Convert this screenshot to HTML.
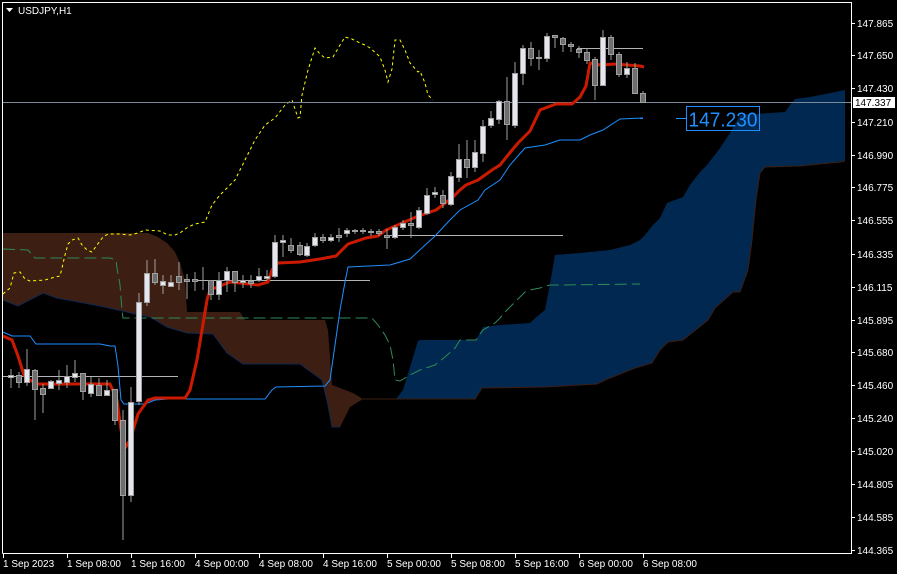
<!DOCTYPE html>
<html><head><meta charset="utf-8"><style>
html,body{margin:0;padding:0;background:#000;}
svg{display:block;font-family:"Liberation Sans",sans-serif;}
</style></head><body>
<svg width="897" height="574" viewBox="0 0 897 574" xmlns="http://www.w3.org/2000/svg">
<rect width="897" height="574" fill="#000"/>
<polygon fill="#3c1e12" points="3,233 148,233 158,237 167,243 175,252 180,263 185,280 187,312 240,312 245,320 325,320 328,330 332,385 340,388 353,393 363,399 350,407 340,427 332,427 328,405 322,380 300,364 243,364 227,353 213,334 187,333 167,327 150,317 140,315 100,306 57,298 43,293 18,306 3,300"/>
<polyline fill="none" stroke="#102850" stroke-width="1" points="3,300 18,306 43,293 57,298 100,306 140,315 150,317 167,327 187,333 213,334 227,353 243,364 300,364 322,380 328,405 332,427 340,427"/>
<polygon fill="#002850" points="396,399 403,390 418,341 420,340 476,340 483,327 500,325 530,323 532,321 540,314 545,310 550,284 555,255 580,253 610,250 630,245 640,240 645,235 652,226 660,218 667,203 683,197 690,185 700,172 707,165 720,148 730,133 740,115 785,112 790,105 795,99 810,97 825,94 845,90 845,161 840,162 800,166 765,167 760,173 756,200 752,240 748,270 740,292 733,292 715,308 708,320 683,340 668,342 660,350 652,363 635,368 620,374 605,380 597,384 545,387 482,388 475,399"/>
<polyline fill="none" stroke="#3c1e12" stroke-width="1" points="363,399 475,399 482,388 545,387 597,384 605,380 620,374 635,368 652,363 660,350 668,342 683,340 708,320 715,308 733,292 740,292 748,270 752,240 756,200 760,173 765,167 800,166 840,162 845,161"/>
<polyline fill="none" stroke="#2e8b57" stroke-width="1" stroke-dasharray="12,5" points="3,249 28,250 35,258 110,258 116,260 117,268 120,285 122,310 123,318 372,318 378,325 385,335 390,345 393,360 395,380 400,381 410,375 420,370 435,365 445,357 455,348 460,340 476,340 483,330 495,323 500,318 505,312 515,302 525,292 530,290 540,288 550,285 560,285 640,284"/>
<g stroke="#b4b4b4" stroke-width="1">
<line x1="3" y1="376.5" x2="178" y2="376.5"/>
<line x1="195" y1="280.5" x2="370" y2="280.5"/>
<line x1="387" y1="235.5" x2="563" y2="235.5"/>
<line x1="577" y1="48.5" x2="643" y2="48.5"/>
</g>
<polyline fill="none" stroke="#ffff00" stroke-width="1" stroke-dasharray="3,3" points="3,294 10,288 14,273 20,272 25,279 30,281 45,280 55,277 60,276 62,268 65,255 68,244 72,240 78,238 82,245 87,250 92,252 97,245 103,237 108,234 120,234 130,235 138,233 145,230 160,231 168,235 175,235 180,233 188,227 195,224 205,222 212,205 220,195 235,180 245,160 255,140 265,125 275,118 285,105 292,100 298,118 300,117 302,95 308,70 315,48 320,54 325,58 333,57 340,45 345,37 352,39 360,43 365,45 370,48 378,55 380,57 385,70 388,82 392,69 395,40 400,40 405,50 410,63 418,72 420,71 425,83 428,95 433,100"/>
<line x1="3" y1="102.5" x2="851" y2="102.5" stroke="#7a8a9a" stroke-width="1"/>
<polyline fill="none" stroke="#1e90ff" stroke-width="1" points="3,332 12,336 30,336 36,344 100,344 110,346 115,346 118,366 121,400 124,404 145,404 155,400 168,399 265,399 272,390 276,387 325,386 330,380 340,310 345,282 348,267 390,265 410,259 435,236 450,220 460,210 478,200 485,190 500,180 510,165 525,148 545,145 560,140 580,140 590,135 603,130 620,119 643,118"/>
<polyline fill="none" stroke="#cc1a00" stroke-width="3" points="3,336 12,340 18,356 24,375 30,380 37,384 110,384 117,400 121,430 125,448 130,440 138,414 148,400 155,398 185,398 190,390 197,360 202,330 207,300 210,290 230,282 258,285 268,282 272,270 278,263 300,262 320,259 336,256 348,244 366,238 378,236 386,230 400,224 416,217 430,212 436,210 452,198 460,190 466,185 478,180 492,170 500,165 508,155 518,143 524,137 530,131 540,110 556,104 572,104 580,97 586,86 590,63 600,65 615,64 640,66 644,67"/>
<g stroke="#a0a0a0" stroke-width="1">
<line x1="11" y1="369" x2="11" y2="388"/><line x1="19" y1="372" x2="19" y2="388"/><line x1="27" y1="349" x2="27" y2="386"/><line x1="35" y1="369" x2="35" y2="420"/><line x1="43" y1="384" x2="43" y2="413"/><line x1="51" y1="380" x2="51" y2="388"/><line x1="59" y1="370" x2="59" y2="390"/><line x1="67" y1="365" x2="67" y2="388"/><line x1="75" y1="360" x2="75" y2="382"/><line x1="83" y1="373" x2="83" y2="400"/><line x1="91" y1="377" x2="91" y2="397"/><line x1="99" y1="378" x2="99" y2="396"/><line x1="107" y1="380" x2="107" y2="396"/><line x1="115" y1="389" x2="115" y2="425"/><line x1="123" y1="410" x2="123" y2="540"/><line x1="131" y1="387" x2="131" y2="502"/><line x1="139" y1="293" x2="139" y2="405"/><line x1="147" y1="260" x2="147" y2="306"/><line x1="155" y1="259" x2="155" y2="285"/><line x1="163" y1="275" x2="163" y2="294"/><line x1="171" y1="275" x2="171" y2="286"/><line x1="179" y1="262" x2="179" y2="290"/><line x1="187" y1="274" x2="187" y2="299"/><line x1="195" y1="272" x2="195" y2="291"/><line x1="203" y1="267" x2="203" y2="290"/><line x1="211" y1="280" x2="211" y2="300"/><line x1="219" y1="272" x2="219" y2="300"/><line x1="227" y1="267" x2="227" y2="292"/><line x1="235" y1="271" x2="235" y2="292"/><line x1="243" y1="275" x2="243" y2="288"/><line x1="251" y1="275" x2="251" y2="288"/><line x1="259" y1="268" x2="259" y2="282"/><line x1="267" y1="270" x2="267" y2="280"/><line x1="275" y1="235" x2="275" y2="278"/><line x1="283" y1="235" x2="283" y2="257"/><line x1="291" y1="238" x2="291" y2="253"/><line x1="300" y1="242" x2="300" y2="256"/><line x1="307" y1="243" x2="307" y2="257"/><line x1="315" y1="233" x2="315" y2="247"/><line x1="323" y1="234" x2="323" y2="243"/><line x1="331" y1="234" x2="331" y2="242"/><line x1="339" y1="228" x2="339" y2="242"/><line x1="347" y1="228" x2="347" y2="237"/><line x1="355" y1="229" x2="355" y2="234"/><line x1="363" y1="228" x2="363" y2="234"/><line x1="371" y1="229" x2="371" y2="236"/><line x1="379" y1="229" x2="379" y2="236"/><line x1="387" y1="229" x2="387" y2="249"/><line x1="395" y1="225" x2="395" y2="239"/><line x1="403" y1="220" x2="403" y2="230"/><line x1="411" y1="212" x2="411" y2="238"/><line x1="419" y1="207" x2="419" y2="229"/><line x1="427" y1="188" x2="427" y2="215"/><line x1="435" y1="187" x2="435" y2="198"/><line x1="443" y1="190" x2="443" y2="208"/><line x1="451" y1="172" x2="451" y2="206"/><line x1="459" y1="144" x2="459" y2="182"/><line x1="467" y1="140" x2="467" y2="178"/><line x1="475" y1="140" x2="475" y2="172"/><line x1="483" y1="120" x2="483" y2="162"/><line x1="491" y1="111" x2="491" y2="128"/><line x1="499" y1="100" x2="499" y2="124"/><line x1="507" y1="77" x2="507" y2="140"/><line x1="515" y1="62" x2="515" y2="128"/><line x1="523" y1="45" x2="523" y2="85"/><line x1="531" y1="42" x2="531" y2="66"/><line x1="539" y1="50" x2="539" y2="70"/><line x1="547" y1="33" x2="547" y2="62"/><line x1="555" y1="35" x2="555" y2="48"/><line x1="563" y1="37" x2="563" y2="52"/><line x1="571" y1="42" x2="571" y2="52"/><line x1="579" y1="46" x2="579" y2="58"/><line x1="587" y1="48" x2="587" y2="64"/><line x1="595" y1="57" x2="595" y2="100"/><line x1="603" y1="30" x2="603" y2="86"/><line x1="611" y1="35" x2="611" y2="60"/><line x1="619" y1="52" x2="619" y2="77"/><line x1="627" y1="62" x2="627" y2="78"/><line x1="635" y1="63" x2="635" y2="93"/><line x1="643" y1="91" x2="643" y2="103"/>
</g>
<g stroke="#a0a0a0" stroke-width="1">
<g fill="#e6e6f0">
<rect x="8.5" y="375.5" width="5" height="2"/><rect x="24.5" y="369.5" width="5" height="13"/><rect x="48.5" y="381.5" width="5" height="7"/><rect x="56.5" y="380.5" width="5" height="3"/><rect x="64.5" y="376.5" width="5" height="6"/><rect x="72.5" y="373.5" width="5" height="4"/><rect x="88.5" y="384.5" width="5" height="9"/><rect x="104.5" y="390.5" width="5" height="5"/><rect x="128.5" y="402.5" width="5" height="93"/><rect x="136.5" y="302.5" width="5" height="99"/><rect x="144.5" y="273.5" width="5" height="29"/><rect x="160.5" y="281.5" width="5" height="4"/><rect x="168.5" y="282.5" width="5" height="4"/><rect x="216.5" y="280.5" width="5" height="14"/><rect x="224.5" y="271.5" width="5" height="9"/><rect x="240.5" y="280.5" width="5" height="2"/><rect x="256.5" y="276.5" width="5" height="4"/><rect x="264.5" y="276.5" width="5" height="2"/><rect x="272.5" y="242.5" width="5" height="34"/><rect x="280.5" y="240.5" width="5" height="2"/><rect x="304.5" y="246.5" width="5" height="9"/><rect x="312.5" y="237.5" width="5" height="8"/><rect x="328.5" y="237.5" width="5" height="3"/><rect x="344.5" y="230.5" width="5" height="3"/><rect x="392.5" y="227.5" width="5" height="10"/><rect x="400.5" y="223.5" width="5" height="4"/><rect x="416.5" y="210.5" width="5" height="17"/><rect x="424.5" y="195.5" width="5" height="18"/><rect x="432.5" y="192.5" width="5" height="2"/><rect x="448.5" y="176.5" width="5" height="28"/><rect x="456.5" y="159.5" width="5" height="18"/><rect x="472.5" y="152.5" width="5" height="15"/><rect x="480.5" y="126.5" width="5" height="27"/><rect x="488.5" y="118.5" width="5" height="7"/><rect x="496.5" y="101.5" width="5" height="18"/><rect x="512.5" y="73.5" width="5" height="52"/><rect x="520.5" y="48.5" width="5" height="25"/><rect x="544.5" y="36.5" width="5" height="22"/><rect x="600.5" y="37.5" width="5" height="48"/><rect x="624.5" y="68.5" width="5" height="6"/>
</g>
<g fill="#6e6e6e">
<rect x="16.5" y="375.5" width="5" height="7"/><rect x="32.5" y="370.5" width="5" height="19"/><rect x="40.5" y="388.5" width="5" height="6"/><rect x="80.5" y="373.5" width="5" height="18"/><rect x="96.5" y="385.5" width="5" height="10"/><rect x="112.5" y="389.5" width="5" height="31"/><rect x="120.5" y="420.5" width="5" height="75"/><rect x="152.5" y="273.5" width="5" height="9"/><rect x="176.5" y="276.5" width="5" height="6"/><rect x="184.5" y="279.5" width="5" height="2"/><rect x="192.5" y="279.5" width="5" height="2"/><rect x="208.5" y="280.5" width="5" height="14"/><rect x="232.5" y="271.5" width="5" height="11"/><rect x="248.5" y="281.5" width="5" height="2"/><rect x="288.5" y="245.5" width="5" height="5"/><rect x="297.5" y="245.5" width="5" height="9"/><rect x="320.5" y="237.5" width="5" height="3"/><rect x="336.5" y="235.5" width="5" height="2"/><rect x="352.5" y="230.5" width="5" height="1"/><rect x="360.5" y="230.5" width="5" height="1"/><rect x="368.5" y="231.5" width="5" height="1"/><rect x="376.5" y="231.5" width="5" height="2"/><rect x="384.5" y="235.5" width="5" height="2"/><rect x="408.5" y="223.5" width="5" height="2"/><rect x="440.5" y="195.5" width="5" height="8"/><rect x="464.5" y="159.5" width="5" height="8"/><rect x="504.5" y="101.5" width="5" height="23"/><rect x="528.5" y="48.5" width="5" height="10"/><rect x="536.5" y="57.5" width="5" height="1"/><rect x="552.5" y="35.5" width="5" height="2"/><rect x="560.5" y="38.5" width="5" height="6"/><rect x="568.5" y="44.5" width="5" height="2"/><rect x="576.5" y="49.5" width="5" height="3"/><rect x="584.5" y="52.5" width="5" height="8"/><rect x="592.5" y="59.5" width="5" height="26"/><rect x="608.5" y="37.5" width="5" height="17"/><rect x="616.5" y="54.5" width="5" height="20"/><rect x="632.5" y="68.5" width="5" height="25"/><rect x="640.5" y="93.5" width="5" height="9"/>
</g>
</g>
<line x1="676" y1="118.5" x2="686" y2="118.5" stroke="#1e90ff"/>
<line x1="640" y1="118.5" x2="643" y2="118.5" stroke="#1e90ff"/>
<rect x="686.5" y="106.5" width="73" height="24" fill="none" stroke="#1e90ff"/>
<text x="723" y="126.5" text-anchor="middle" font-size="20" fill="#1e90ff" textLength="69" lengthAdjust="spacingAndGlyphs">147.230</text>
<polyline points="2.5,553.5 2.5,2.5 851.5,2.5 851.5,553.5 2.5,553.5" fill="none" stroke="#fff" stroke-width="1"/>
<polygon points="6,8 13,8 9.5,12" fill="#fff"/>
<text x="18" y="14" font-size="10" fill="#fff">USDJPY,H1</text>
<g fill="#fff" font-size="10" stroke="none">
<text x="857" y="27">147.865</text><text x="857" y="59">147.650</text><text x="857" y="92">147.430</text><text x="857" y="126">147.210</text><text x="857" y="159">146.990</text><text x="857" y="191">146.775</text><text x="857" y="224">146.555</text><text x="857" y="258">146.335</text><text x="857" y="291">146.115</text><text x="857" y="324">145.895</text><text x="857" y="356">145.680</text><text x="857" y="389">145.460</text><text x="857" y="422">145.240</text><text x="857" y="455">145.020</text><text x="857" y="488">144.805</text><text x="857" y="521">144.585</text><text x="857" y="554">144.365</text>
</g>
<g stroke="#fff">
<line x1="851" y1="23.5" x2="855" y2="23.5"/><line x1="851" y1="55.5" x2="855" y2="55.5"/><line x1="851" y1="88.5" x2="855" y2="88.5"/><line x1="851" y1="122.5" x2="855" y2="122.5"/><line x1="851" y1="155.5" x2="855" y2="155.5"/><line x1="851" y1="187.5" x2="855" y2="187.5"/><line x1="851" y1="220.5" x2="855" y2="220.5"/><line x1="851" y1="254.5" x2="855" y2="254.5"/><line x1="851" y1="287.5" x2="855" y2="287.5"/><line x1="851" y1="320.5" x2="855" y2="320.5"/><line x1="851" y1="352.5" x2="855" y2="352.5"/><line x1="851" y1="385.5" x2="855" y2="385.5"/><line x1="851" y1="418.5" x2="855" y2="418.5"/><line x1="851" y1="451.5" x2="855" y2="451.5"/><line x1="851" y1="484.5" x2="855" y2="484.5"/><line x1="851" y1="517.5" x2="855" y2="517.5"/><line x1="851" y1="550.5" x2="855" y2="550.5"/>
</g>
<rect x="853" y="97" width="42" height="11" fill="#fff"/>
<text x="855" y="106" font-size="10" fill="#000">147.337</text>
<g stroke="#fff">
<line x1="3.5" y1="553" x2="3.5" y2="558"/><line x1="67.5" y1="553" x2="67.5" y2="558"/><line x1="131.5" y1="553" x2="131.5" y2="558"/><line x1="195.5" y1="553" x2="195.5" y2="558"/><line x1="259.5" y1="553" x2="259.5" y2="558"/><line x1="323.5" y1="553" x2="323.5" y2="558"/><line x1="387.5" y1="553" x2="387.5" y2="558"/><line x1="451.5" y1="553" x2="451.5" y2="558"/><line x1="515.5" y1="553" x2="515.5" y2="558"/><line x1="579.5" y1="553" x2="579.5" y2="558"/><line x1="643.5" y1="553" x2="643.5" y2="558"/>
</g>
<g fill="#fff" font-size="10">
<text x="3" y="567">1 Sep 2023</text><text x="67" y="567">1 Sep 08:00</text><text x="131" y="567">1 Sep 16:00</text><text x="195" y="567">4 Sep 00:00</text><text x="259" y="567">4 Sep 08:00</text><text x="323" y="567">4 Sep 16:00</text><text x="387" y="567">5 Sep 00:00</text><text x="451" y="567">5 Sep 08:00</text><text x="515" y="567">5 Sep 16:00</text><text x="579" y="567">6 Sep 00:00</text><text x="643" y="567">6 Sep 08:00</text>
</g>
</svg>
</body></html>
